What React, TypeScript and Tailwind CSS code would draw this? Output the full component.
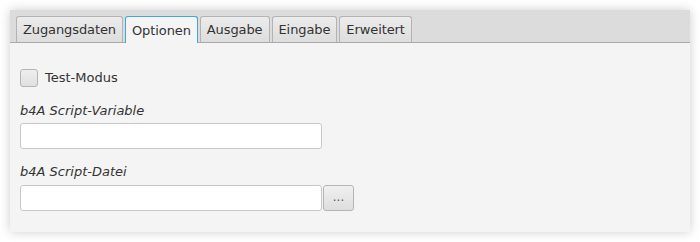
const tabs = ["Zugangsdaten", "Optionen", "Ausgabe", "Eingabe", "Erweitert"];

export default function App() {
  return (
    <div
      className="h-[242px] w-[700px] bg-white p-[10px] text-[13px] text-[#333333]"
      style={{ fontFamily: '"DejaVu Sans", sans-serif' }}
    >
      <div className="flex h-[222px] flex-col bg-[#f4f4f4] shadow-[0_0_10px_rgba(0,0,0,0.2)]">
        <div className="flex h-[33px] shrink-0 items-end gap-[2px] border-b border-[#a9a9a9] bg-[#dcdcdc] pl-[6px]">
          {tabs.map((tab) => {
            const active = tab === "Optionen";
            return (
              <div
                key={tab}
                className={
                  active
                    ? "-mb-px flex h-[27px] items-center rounded-t-[3px] border border-b-0 border-[#3ea6d8] bg-[#f4f4f4] px-[6px] pt-px leading-none tracking-[-0.1px]"
                    : "flex h-[26px] items-center rounded-t-[3px] border border-b-0 border-[#b3b3b3] bg-gradient-to-b from-[#ececec] to-[#dddddd] px-[6px] leading-none tracking-[-0.1px]"
                }
              >
                {tab}
              </div>
            );
          })}
        </div>

        <div className="flex flex-col px-[10px] pt-[25px]">
          <label className="flex items-center gap-[7px]">
            <span className="h-[18px] w-[18px] rounded-[3px] border border-[#b5b5b5] bg-gradient-to-b from-[#eeeeee] to-[#e0e0e0]" />
            <span>Test-Modus</span>
          </label>

          <div className="mt-[15px] italic leading-[16px]">b4A Script-Variable</div>
          <input
            className="mt-[4px] h-[26px] w-[302px] rounded-[3px] border border-[#c8c8c8] bg-white outline-none"
            type="text"
          />

          <div className="mt-[15px] italic leading-[16px]">b4A Script-Datei</div>
          <div className="mt-[5px] flex">
            <input
              className="h-[26px] w-[302px] rounded-[3px] border border-[#c8c8c8] bg-white outline-none"
              type="text"
            />
            <button
              type="button"
              className="ml-px flex h-[26px] w-[31px] items-center justify-center rounded-[3px] border border-[#b5b5b5] bg-gradient-to-b from-[#f0f0f0] to-[#dedede] pb-[2px] text-[12px] text-[#555]"
            >
              ...
            </button>
          </div>
        </div>
      </div>
    </div>
  );
}
